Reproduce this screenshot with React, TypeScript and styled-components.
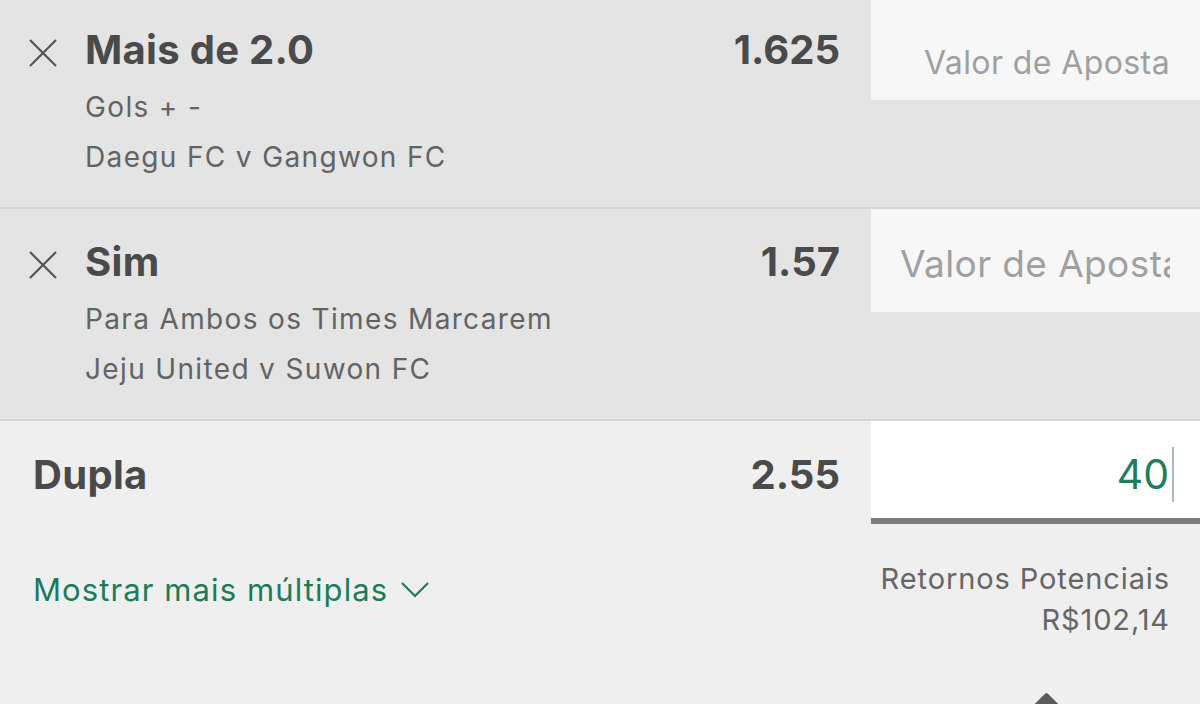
import React from 'react'
import styled, { createGlobalStyle } from 'styled-components'

const GlobalStyle = createGlobalStyle`
  html, body {
    margin: 0;
    padding: 0;
    background: #efefef;
    font-family: Inter, 'Noto Sans', sans-serif;
  }
`

const Screen = styled.div`
  position: relative;
  width: 1200px;
  height: 704px;
  overflow: hidden;
  background: #efefef;
`

const SlipList = styled.div`
  margin-top: -3px;
`

const SelectionRow = styled.div`
  display: flex;
  height: 210px;
  background: #e4e4e4;
  border-bottom: 2px solid #d6d6d6;
`

const SelectionInfo = styled.div`
  flex: 1;
  display: grid;
  grid-template-columns: 85px 1fr auto;
  align-items: start;
  padding: 28px 31px 0 0;
`

const RemoveButton = styled.div`
  display: flex;
  align-items: center;
  justify-content: center;
  height: 50px;
  margin-top: 3px;
`

const Title = styled.div`
  font-size: 40px;
  line-height: 50px;
  font-weight: 700;
  color: #4a4a4a;
  letter-spacing: 0.3px;
`

const SubLines = styled.div`
  margin-top: 7px;
`

const SubLine = styled.div`
  font-size: 28px;
  line-height: 50px;
  color: #636363;
  letter-spacing: 1.35px;
`

const Odds = styled.div`
  font-size: 40px;
  line-height: 50px;
  font-weight: 700;
  color: #4a4a4a;
  text-align: right;
`

const StakeColumn = styled.div`
  width: 329px;
`

const StakeBox = styled.div<{ $large?: boolean }>`
  height: 103px;
  box-sizing: border-box;
  background: #f7f7f7;
  padding: ${p => (p.$large ? '35px' : '46px')} 30px 0 29px;
`

const Placeholder = styled.div<{ $large?: boolean }>`
  overflow: hidden;
  white-space: nowrap;
  text-align: right;
  font-size: ${p => (p.$large ? '37px' : '32px')};
  line-height: 40px;
  color: #a0a0a0;
  letter-spacing: 0.4px;
`

const MultipleBlock = styled.div`
  display: grid;
  grid-template-columns: 1fr 329px;
  background: #efefef;
`

const MultipleHead = styled.div`
  display: flex;
  justify-content: space-between;
  padding: 29px 31px 0 33px;
`

const ActiveStake = styled.div`
  display: flex;
  justify-content: flex-end;
  align-items: flex-start;
  box-sizing: border-box;
  height: 103px;
  padding: 26px 26px 0 0;
  background: #ffffff;
  border-bottom: 6px solid #7b7b7b;
`

const StakeValue = styled.span`
  font-size: 41px;
  line-height: 55px;
  color: #1f7d5b;
`

const Caret = styled.span`
  width: 2px;
  height: 55px;
  margin-left: 3px;
  background: #a9bcb4;
`

const MoreLink = styled.div`
  display: flex;
  align-items: center;
  gap: 13px;
  padding: 16px 0 0 33px;
  font-size: 31px;
  line-height: 40px;
  color: #1c7b59;
  letter-spacing: 1.1px;
`

const Returns = styled.div`
  padding: 34px 30px 0 0;
  text-align: right;
  font-size: 29px;
  line-height: 41px;
  color: #666666;
  letter-spacing: 0.9px;
`

const Handle = styled.div`
  position: absolute;
  left: 1035px;
  top: 697px;
  width: 23px;
  height: 23px;
  background: #5c5c5c;
  border-radius: 2px;
  transform: rotate(45deg);
`

const CloseIcon = () => (
  <svg width="28" height="28" viewBox="0 0 28 28">
    <path d="M1 1 L27 27 M27 1 L1 27" stroke="#555" strokeWidth="2.2" fill="none" />
  </svg>
)

const ChevronDown = () => (
  <svg width="28" height="16" viewBox="0 0 28 16">
    <path d="M1 1 L14 14 L27 1" stroke="#1c7b59" strokeWidth="2.2" fill="none" />
  </svg>
)

type Selection = {
  pick: string
  market: string
  event: string
  odds: string
  large?: boolean
}

const selections: Selection[] = [
  { pick: 'Mais de 2.0', market: 'Gols + -', event: 'Daegu FC v Gangwon FC', odds: '1.625' },
  { pick: 'Sim', market: 'Para Ambos os Times Marcarem', event: 'Jeju United v Suwon FC', odds: '1.57', large: true },
]

const App = () => {
  return (
    <Screen>
      <GlobalStyle />
      <SlipList>
        {selections.map(s => (
          <SelectionRow key={s.pick}>
            <SelectionInfo>
              <RemoveButton>
                <CloseIcon />
              </RemoveButton>
              <div>
                <Title>{s.pick}</Title>
                <SubLines>
                  <SubLine>{s.market}</SubLine>
                  <SubLine>{s.event}</SubLine>
                </SubLines>
              </div>
              <Odds>{s.odds}</Odds>
            </SelectionInfo>
            <StakeColumn>
              <StakeBox $large={s.large}>
                <Placeholder $large={s.large}>Valor de Aposta</Placeholder>
              </StakeBox>
            </StakeColumn>
          </SelectionRow>
        ))}
        <MultipleBlock>
          <MultipleHead>
            <Title>Dupla</Title>
            <Odds>2.55</Odds>
          </MultipleHead>
          <ActiveStake>
            <StakeValue>40</StakeValue>
            <Caret />
          </ActiveStake>
          <MoreLink>
            Mostrar mais múltiplas
            <ChevronDown />
          </MoreLink>
          <Returns>
            <div>Retornos Potenciais</div>
            <div>R$102,14</div>
          </Returns>
        </MultipleBlock>
      </SlipList>
      <Handle />
    </Screen>
  )
}

export default App
